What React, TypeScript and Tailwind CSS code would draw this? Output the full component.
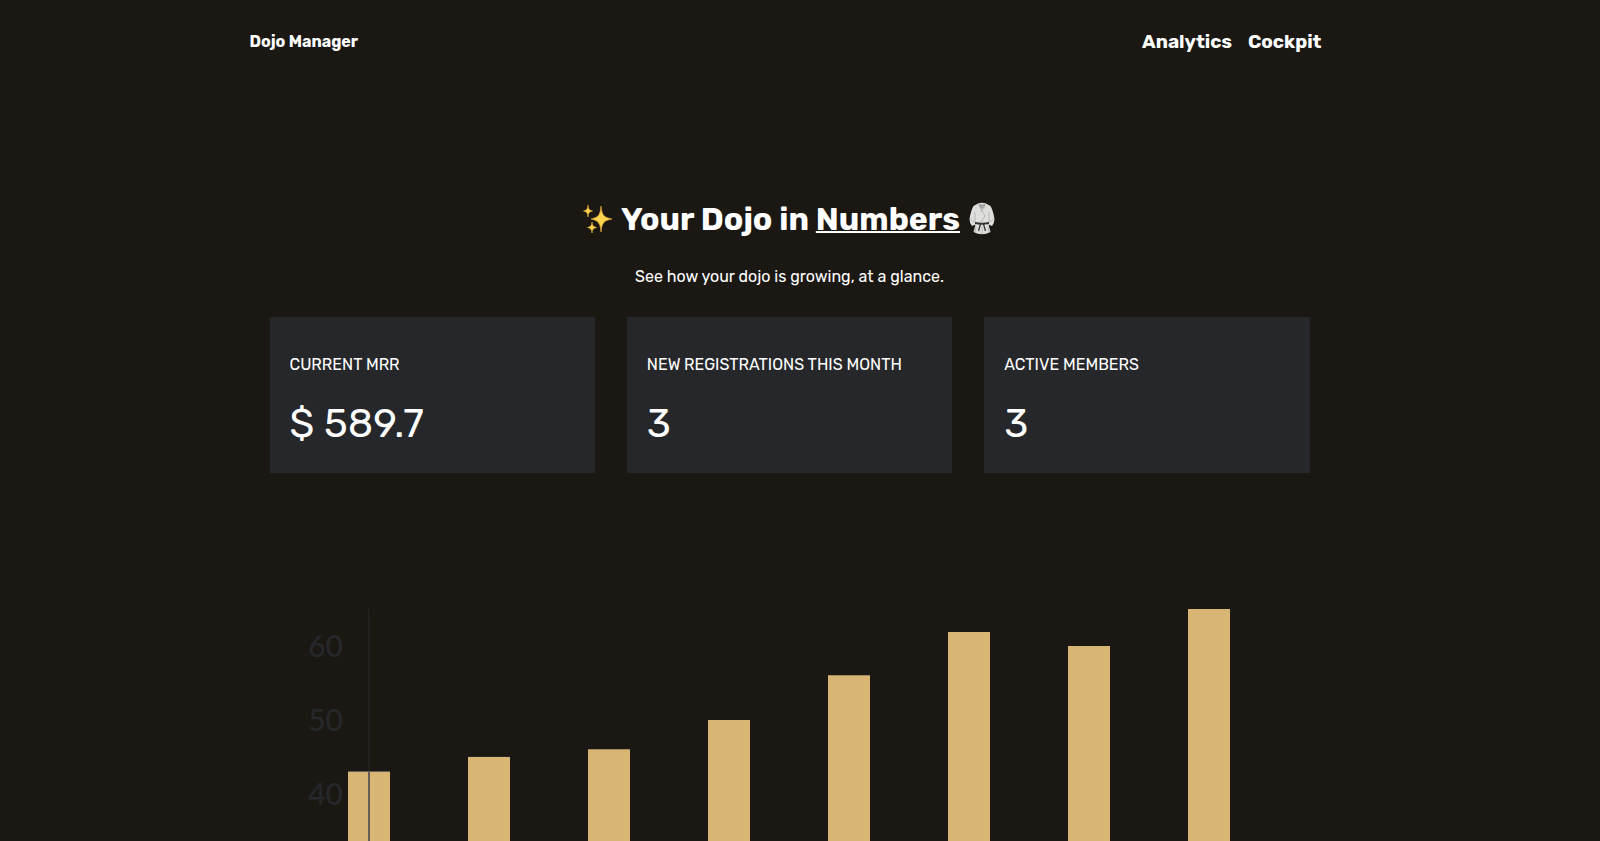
const navLinks = [
  { label: "Analytics", href: "#analytics" },
  { label: "Cockpit", href: "#cockpit" }
];

const stats = [
  { label: "CURRENT MRR", value: "$ 589.7" },
  { label: "NEW REGISTRATIONS THIS MONTH", value: "3" },
  { label: "ACTIVE MEMBERS", value: "3" }
];

const members = [
  { count: 43, cap: "#665c58" },
  { count: 45, cap: "#26272b" },
  { count: 46, cap: "#a58a62" },
  { count: 50 },
  { count: 56, cap: "#a58a62" },
  { count: 62 },
  { count: 60 },
  { count: 65 }
];

const ticks = [40, 50, 60];

const chart = { width: 1040, height: 520, base: 501, unit: 7.4, left: 99, step: 120, bar: 42 };

const yFor = (value: number) => Math.ceil(chart.base - value * chart.unit);

function Sparkles() {
  return (
    <svg viewBox="0 0 30 32" className="h-8 w-[30px]" aria-hidden="true">
      <g fill="#ffd54f" stroke="#d9a038" strokeWidth="0.7" strokeLinejoin="round">
        <path d="M18 3C19 12 20 14 29 16C20 18 19 20 18 29C17 20 16 18 8 16C16 14 17 12 18 3Z" />
        <path d="M5 2C5.500 6 6 7 9.500 8C6 9 5.500 10 5 14C4.500 10 4 9 .5 8C4 7 4.500 6 5 2Z" />
        <path d="M9 19C9.500 22.500 10 23.500 13.500 24.500C10 25.500 9.500 26.500 9 30C8.500 26.500 8 25.500 4.500 24.500C8 23.500 8.500 22.500 9 19Z" />
      </g>
    </svg>
  );
}

function Gi() {
  return (
    <svg viewBox="0 0 28 34" className="h-[34px] w-7" aria-hidden="true">
      <path
        d="M10 1.500Q14 0 18 1.500L22.500 4Q25 8 26.500 17Q26.500 21 24 24L20.500 22.500L22.500 30Q14 34.500 5.500 30L7.500 22.500L4 24Q1.500 21 1.500 17Q3 8 5.500 4Z"
        fill="#dededc"
      />
      <path d="M10 1.500Q14 3.500 18 1.500L16.500 5L14 7L11.500 5Z" fill="#a3a3a1" />
      <path
        d="M11 4L17 14L13 20M17 4L13 10M7 10V20M21 10V20M2.500 17L6 20M25.500 17L22 20M14 25V32M8 25L7 30M20 25L21 30"
        fill="none"
        stroke="#b0b0ae"
        strokeWidth="0.9"
      />
      <path d="M7 20Q14 21.500 21 20V22Q14 23.500 7 22Z" fill="#343434" />
      <path d="M12.500 22L10.500 29M15.500 22L17.500 29" stroke="#343434" strokeWidth="1.3" />
    </svg>
  );
}

function MembersChart() {
  return (
    <svg
      viewBox={`0 0 ${chart.width} ${chart.height}`}
      className="mt-[116px] w-full"
      role="img"
      aria-label="Members per month"
      shapeRendering="crispEdges"
    >
      {ticks.map((tick) => (
        <text
          key={tick}
          x="73"
          y={chart.base + 11 - tick * chart.unit}
          textAnchor="end"
          fill="#26272b"
          className="font-[Lato,sans-serif] text-[30px] font-medium"
        >
          {tick}
        </text>
      ))}

      {/* dotted value axis */}
      <g stroke="#26272b" strokeWidth="1" strokeDasharray="1 1">
        <line x1="98.5" x2="98.5" y1={yFor(65)} y2={chart.base} />
        <line x1="99.5" x2="99.5" y1={yFor(65) + 1} y2={chart.base} />
      </g>

      {members.map(({ count, cap }, i) => {
        const x = chart.left + i * chart.step - chart.bar / 2;
        return (
          <g key={i}>
            <rect x={x} y={yFor(count)} width={chart.bar} height={chart.base - yFor(count)} fill="#d8b573" />
            {cap && <rect x={x} y={yFor(count) - 1} width={chart.bar} height="1" fill={cap} />}
          </g>
        );
      })}

      <rect x="98" y={yFor(43)} width="2" height={chart.base - yFor(43)} fill="#665c58" />
    </svg>
  );
}

export default function App() {
  return (
    <div className="min-h-screen bg-[#1b1813] pr-[21px] font-[Rubik,Roboto,sans-serif] text-white">
      <div className="mx-auto max-w-[1080px]">
        <header className="flex h-[84px] items-center justify-between pr-2">
          <a href="#home" className="font-bold">
            Dojo Manager
          </a>
          <nav className="flex gap-4 text-[19px] font-bold">
            {navLinks.map((link) => (
              <a key={link.label} href={link.href}>
                {link.label}
              </a>
            ))}
          </nav>
        </header>

        <main className="px-5 pt-[115px]">
          <h1 className="flex items-center justify-center gap-2 text-[32px] leading-10 font-bold">
            <Sparkles />
            <span>
              Your Dojo in <span className="underline decoration-2">Numbers</span>
            </span>
            <Gi />
          </h1>
          <p className="mt-[26px] text-center">See how your dojo is growing, at a glance.</p>

          <section className="mt-7 grid grid-cols-3 gap-8">
            {stats.map((stat) => (
              <div key={stat.label} className="h-[156px] bg-[#26272b] px-5 pt-9">
                <h2>{stat.label}</h2>
                <p className="mt-6 text-[40px] leading-[46px]">{stat.value}</p>
              </div>
            ))}
          </section>

          <MembersChart />
        </main>
      </div>
    </div>
  );
}
